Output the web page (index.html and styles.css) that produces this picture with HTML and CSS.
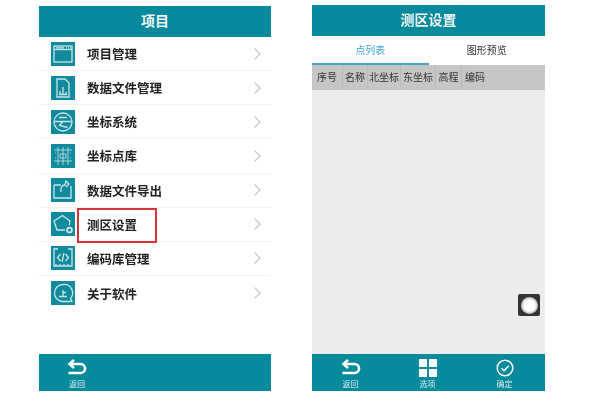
FILE: index.html
```html
<!DOCTYPE html>
<html lang="zh">
<head>
<meta charset="utf-8" />
<title>测区设置</title>
<link rel="stylesheet" href="styles.css">
</head>
<body>

<div class="phone phone-left">
  <div class="title">项目</div>
  <div class="menu">

    <div class="row">
      <div class="ico">
        <svg viewBox="0 0 24 24"><rect x="3" y="4" width="18" height="16" /><path d="M3 7.500h18" /><path d="M5 5.800h8M15 5.800h1M17 5.800h1M19 5.800h1" /></svg>
      </div>
      <span class="name">项目管理</span>
      <span class="arrow"></span>
    </div>

    <div class="row">
      <div class="ico">
        <svg viewBox="0 0 24 24"><path d="M6 3h8l4 4v14H6z" /><path d="M9 18v-3M12 18v-7M15 18v-2M8 18.500h8" /></svg>
      </div>
      <span class="name">数据文件管理</span>
      <span class="arrow"></span>
    </div>

    <div class="row">
      <div class="ico">
        <svg viewBox="0 0 24 24"><circle cx="12" cy="12" r="9" /><path d="M3.500 11.500h17M8 7.500h8M12 11.500l-3.500 4 8 2" /></svg>
      </div>
      <span class="name">坐标系统</span>
      <span class="arrow"></span>
    </div>

    <div class="row">
      <div class="ico">
        <svg viewBox="0 0 24 24" class="thin"><path d="M3 6h18M3 17h18M7 3v18M12 3v18M17 3v18" /><path d="M9 10h6v4H9zM4 9h1M19 9h1M4 14h1M19 14h1" /></svg>
      </div>
      <span class="name">坐标点库</span>
      <span class="arrow"></span>
    </div>

    <div class="row">
      <div class="ico">
        <svg viewBox="0 0 24 24"><path d="M3 7h7M20 8v12H3V7" /><path d="M10 14c-1-4 1-7 4-7l1-4 3 3-3 3" /></svg>
      </div>
      <span class="name">数据文件导出</span>
      <span class="arrow"></span>
    </div>

    <div class="row">
      <div class="ico">
        <svg viewBox="0 0 24 24"><path d="M11.500 3.500l7.500 5.500-1.500 9H6L3 9z" /><circle class="dot" cx="18.500" cy="18" r="4" /><circle class="hole" cx="18.500" cy="18" r="1.500" /></svg>
      </div>
      <span class="name">测区设置</span>
      <span class="arrow"></span>
      <div class="mark"></div>
    </div>

    <div class="row">
      <div class="ico">
        <svg viewBox="0 0 24 24"><path d="M7 3H3v17h18V3h-4" /><path d="M9.500 8l-3 3.500 3 3.500M14.500 8l3 3.500-3 3.500M13 7l-2 9" /><path d="M5 20v-2M9 20v-2M13 20v-2M17 20v-2" /></svg>
      </div>
      <span class="name">编码库管理</span>
      <span class="arrow"></span>
    </div>

    <div class="row">
      <div class="ico">
        <svg viewBox="0 0 24 24"><path d="M12 3.500a8.500 8.500 0 1 0 0 17h9l-1.500-3a8.500 8.500 0 0 0-7.500-14z" /><path d="M8 15.500h8M12 9v6.500M12 11.500h3" /></svg>
      </div>
      <span class="name">关于软件</span>
      <span class="arrow"></span>
    </div>

  </div>
  <div class="foot foot-one">
    <div class="foot-btn">
      <svg viewBox="0 0 20 16" class="foot-ico"><path d="M7 1L2.500 5 7 9" /><path d="M3 5h10.500a4.500 4.500 0 0 1 0 9H1.500" /></svg>
      <span>返回</span>
    </div>
  </div>
</div>

<div class="phone phone-right">
  <div class="title">测区设置</div>
  <div class="tabs">
    <div class="tab active">点列表</div>
    <div class="tab">图形预览</div>
  </div>
  <div class="thead">
    <span class="th w1">序号</span>
    <span class="th w2">名称</span>
    <span class="th w3">北坐标</span>
    <span class="th w4">东坐标</span>
    <span class="th w5">高程</span>
    <span class="th w5">编码</span>
  </div>
  <div class="tbody">
    <div class="float-btn"><i></i></div>
  </div>
  <div class="foot foot-three">
    <div class="foot-btn">
      <svg viewBox="0 0 20 16" class="foot-ico"><path d="M7 1L2.500 5 7 9" /><path d="M3 5h10.500a4.500 4.500 0 0 1 0 9H1.500" /></svg>
      <span>返回</span>
    </div>
    <div class="foot-btn">
      <div class="grid-ico"><b></b><b></b><b></b><b></b></div>
      <span>选项</span>
    </div>
    <div class="foot-btn">
      <svg viewBox="0 0 18 18" class="foot-ico round"><circle cx="9" cy="9" r="7.800" /><path d="M5.500 9.200l2.500 2.500 4.800-5" /></svg>
      <span>确定</span>
    </div>
  </div>
</div>

</body>
</html>
```

FILE: styles.css
```css
* { box-sizing: border-box; }

html, body { margin: 0; height: 100%; }

body {
  display: flex;
  align-items: flex-start;
  gap: 41px;
  padding: 5px 0 0 39px;
  background-color: #ffffff;
  font-family: "Liberation Sans", "Noto Sans CJK SC", sans-serif;
  color: #222;
}

.phone {
  display: flex;
  flex-direction: column;
  filter: blur(0.4px);
}

.phone-left { width: 232px; height: 385px; margin-top: 1px; }
.phone-right { width: 233px; height: 386px; }

.title {
  height: 31px;
  flex: none;
  background-color: #078a9c;
  color: #f2f7f8;
  font-size: 14px;
  font-weight: bold;
  line-height: 31px;
  text-align: center;
}

.menu { flex: 1; }

.row {
  position: relative;
  display: flex;
  align-items: center;
  height: 34.150px;
  padding-left: 12px;
  border-bottom: 1px solid #f4f4f4;
}

.row:last-child { border-bottom: none; }

.ico {
  width: 24px;
  height: 24px;
  flex: none;
  background-color: #118a9d;
}

.ico svg {
  display: block;
  width: 24px;
  height: 24px;
  fill: none;
  stroke: #c9e6ea;
  stroke-width: 1.300;
}

.ico svg.thin { stroke-width: 0.800; }
.ico svg .dot { fill: #c9e6ea; stroke: #118a9d; }
.ico svg .hole { fill: #118a9d; stroke: none; }

.name {
  margin-left: 12px;
  font-size: 12.500px;
  font-weight: bold;
  color: #222;
}

.arrow {
  width: 8px;
  height: 8px;
  margin-left: auto;
  margin-right: 12px;
  border-top: 1px solid #bdbdbd;
  border-right: 1px solid #bdbdbd;
  transform: rotate(45deg);
}

.mark {
  position: absolute;
  left: 38px;
  top: 0;
  width: 80px;
  height: 35px;
  border: 2.500px solid #d3343c;
}

.foot {
  display: flex;
  height: 37px;
  flex: none;
  margin-top: auto;
  background-color: #078a9c;
}

.foot-btn {
  display: flex;
  flex-direction: column;
  align-items: center;
  color: #d7ecef;
  font-size: 8px;
  line-height: 9px;
  padding-top: 5px;
}

.foot-one .foot-btn { width: 76px; }
.foot-three { padding-right: 2px; }
.foot-three .foot-btn { flex: 1; }

.foot-ico {
  display: block;
  width: 20px;
  height: 16px;
  margin-bottom: 5px;
  fill: none;
  stroke: #ffffff;
  stroke-width: 2.600;
}

.foot-ico.round {
  width: 18px;
  height: 18px;
  margin-bottom: 3px;
  stroke-width: 1.500;
}

.grid-ico {
  display: grid;
  grid-template-columns: 8px 8px;
  grid-auto-rows: 8px;
  gap: 2px;
  height: 18px;
  margin-bottom: 3px;
}

.grid-ico b { background-color: #ffffff; }

.tabs {
  display: flex;
  height: 29px;
  flex: none;
}

.tab {
  flex: 1;
  padding-top: 9px;
  font-size: 10px;
  line-height: 12px;
  text-align: center;
  color: #333;
}

.tab.active {
  color: #3fa6d0;
  border-bottom: 2px solid #3fa6d0;
}

.thead {
  display: flex;
  align-items: stretch;
  height: 25px;
  flex: none;
  background-color: #c6c6c6;
}

.th {
  font-size: 10px;
  line-height: 25px;
  text-align: center;
  color: #333;
  border-right: 1px solid #bababa;
}

.th:last-child { border-right: none; }

.w1 { width: 31px; }
.w2 { width: 25px; }
.w3 { width: 33px; }
.w4 { width: 35px; }
.w5 { width: 26px; }

.tbody {
  position: relative;
  flex: 1;
  background-color: #ececec;
}

.float-btn {
  position: absolute;
  left: 206px;
  top: 204px;
  display: flex;
  align-items: center;
  justify-content: center;
  width: 22px;
  height: 22px;
  border-radius: 2px;
  background-color: #333333;
}

.float-btn i {
  width: 17px;
  height: 17px;
  border-radius: 50%;
  background: radial-gradient(circle, #ffffff 45%, #8a8a8a 85%, #444444 100%);
}
```
